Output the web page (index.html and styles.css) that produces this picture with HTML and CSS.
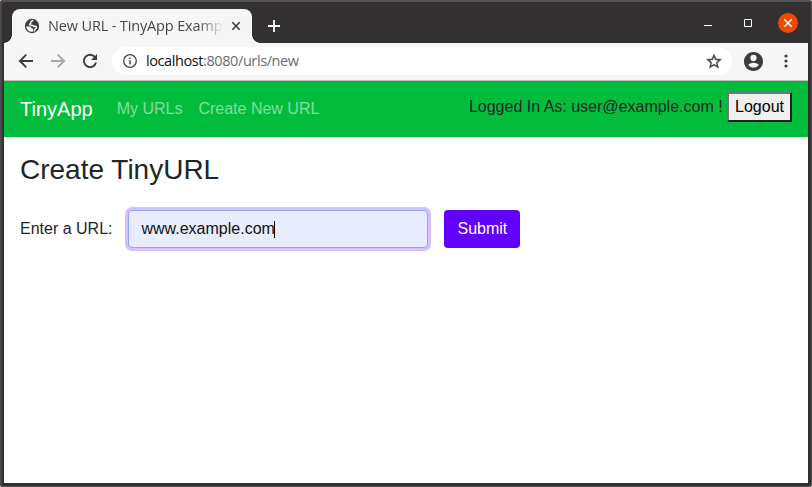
FILE: index.html
```html
<!DOCTYPE html>
<html lang="en">
<head>
<meta charset="utf-8">
<title>New URL - TinyApp Example</title>
<link rel="stylesheet" href="styles.css">
</head>
<body>
<div class="window">
  <header class="titlebar">
    <div class="tab">
      <svg class="globe" viewBox="0 0 16 16" width="16" height="16"><circle cx="8" cy="8" r="7.200" fill="#3c4043"/><path d="M9.300 2.300C7.500 3 6.700 3.700 7 4.600c.3.800-1.700.8-1.500 2 .2 1 2.800.2 3.600 1.200.5.700 1.600.5 2.600.6 1 .2 1 1.700-.1 2.300-.8.500-1 1.700-1.700 2.600" fill="none" stroke="#f6f6f6" stroke-width="1.500"/><path d="M2.200 8.200l3.500.3c1.400.2 1.900.9 1.900 2h1.500v3.200c-3.700.5-6.700-2-6.900-5.500z" fill="#f6f6f6"/></svg>
      <span class="tab-title">New URL - TinyApp Example</span>
      <svg class="tab-close" viewBox="0 0 10 10" width="10" height="10"><path d="M1.300 1.300l7.400 7.400M8.700 1.300L1.300 8.700" stroke="#3c4043" stroke-width="1.600"/></svg>
    </div>
    <svg class="new-tab" viewBox="0 0 12 12" width="12" height="12"><path d="M6 0v12M0 6h12" stroke="#fff" stroke-width="1.800"/></svg>
    <div class="controls">
      <svg class="minimize" viewBox="0 0 8 8" width="8" height="8"><path d="M0 6.500h8" stroke="#fff"/></svg>
      <svg class="maximize" viewBox="0 0 8 8" width="8" height="8"><path d="M.5.5h7v7h-7z" fill="none" stroke="#fff"/></svg>
      <svg viewBox="0 0 20 20" width="20" height="20"><circle cx="10" cy="10" r="10" fill="#f04a00"/><path d="M6.300 6.300l7.400 7.400M13.700 6.300l-7.400 7.400" stroke="#fff" stroke-width="1.500"/></svg>
    </div>
  </header>
  <div class="toolbar">
    <svg viewBox="0 0 16 16" width="16" height="16"><path d="M15 8H2M8.300 1.600L1.900 8l6.400 6.400" fill="none" stroke="#3c3c3c" stroke-width="1.900"/></svg>
    <svg viewBox="0 0 16 16" width="16" height="16"><path d="M1 8h13M7.700 1.600L14.100 8l-6.400 6.400" fill="none" stroke="#a6a6a6" stroke-width="1.900"/></svg>
    <svg viewBox="0 0 16 16" width="16" height="16"><path d="M13 4.100A6.200 6.200 0 1 0 14.100 9.600" fill="none" stroke="#3c3c3c" stroke-width="1.900"/><path d="M15 1v6H9z" fill="#3c3c3c"/></svg>
    <div class="address">
      <svg viewBox="0 0 14 14" width="14" height="14"><circle cx="7" cy="7" r="6.300" fill="none" stroke="#444" stroke-width="1.300"/><path d="M7 6.200v4.300M7 3.500V5" stroke="#444" stroke-width="1.500"/></svg>
      <span class="url">localhost<span class="path">:8080/urls/new</span></span>
      <svg class="star" viewBox="1.500 1 21 21" width="16" height="16"><path fill="#444" stroke="#444" stroke-width=".4" d="M22 9.240l-7.190-.62L12 2 9.190 8.630 2 9.240l5.460 4.730L5.820 21 12 17.270 18.180 21l-1.630-7.030L22 9.240zM12 15.400l-3.760 2.270 1-4.280-3.320-2.880 4.380-.38L12 6.100l1.710 4.040 4.380.38-3.320 2.880 1 4.280L12 15.400z"/></svg>
    </div>
    <svg class="profile" viewBox="2 2 20 20" width="19" height="19"><path fill="#3c3c3c" d="M12 2C6.480 2 2 6.480 2 12s4.480 10 10 10 10-4.480 10-10S17.520 2 12 2zm0 3a3.300 3.300 0 1 1 0 6.600 3.300 3.300 0 0 1 0-6.600zm0 13.400c-2.300 0-4.300-1-5.500-2.700.1-1.500 3.500-2.500 5.500-2.500s5.400 1 5.500 2.500c-1.200 1.700-3.200 2.700-5.500 2.700z"/></svg>
    <svg class="kebab" viewBox="0 0 4 14" width="4" height="14"><g fill="#3c3c3c"><circle cx="2" cy="2" r="1.600"/><circle cx="2" cy="7" r="1.600"/><circle cx="2" cy="12" r="1.600"/></g></svg>
  </div>
  <div class="page">
    <nav class="navbar">
      <a class="brand">TinyApp</a>
      <a class="link">My URLs</a>
      <a class="link">Create New URL</a>
      <div class="session">Logged In As: user@example.com ! <button class="logout">Logout</button></div>
    </nav>
    <main>
      <h3>Create TinyURL</h3>
      <form class="form">
        <label>Enter a URL:</label>
        <div class="field">www.example.com<i class="caret"></i></div>
        <button type="button" class="submit">Submit</button>
      </form>
    </main>
  </div>
</div>
</body>
</html>
```
FILE: styles.css
```css
* { box-sizing: border-box; }
html { background: #fff; }
body {
  margin: 0;
  font: 16px/24px "Liberation Sans", Arial, sans-serif;
  color: #212529;
}
svg { display: block; flex: none; }
.window {
  width: 812px;
  height: 487px;
  padding: 0 4px 4px;
  display: flex;
  flex-direction: column;
  overflow: hidden;
  background: #323030;
  border-radius: 3px;
  box-shadow: inset 0 2px #555453, inset 2px 0 #4b4947, inset -1px -1px #555453;
}
.titlebar {
  height: 43px;
  flex: none;
  display: flex;
  align-items: flex-start;
  padding: 9px 10px 0 8px;
}
.tab {
  position: relative;
  width: 240px;
  height: 34px;
  display: flex;
  align-items: center;
  padding: 0 11px 0 12px;
  background: #f6f6f6;
  border-radius: 8px 8px 0 0;
}
.tab::before, .tab::after {
  content: "";
  position: absolute;
  bottom: 0;
  width: 8px;
  height: 8px;
}
.tab::before {
  left: -8px;
  background: radial-gradient(circle at 0 0, transparent 7.5px, #f6f6f6 8px);
}
.tab::after {
  right: -8px;
  background: radial-gradient(circle at 100% 0, transparent 7.5px, #f6f6f6 8px);
}
.tab-title {
  width: 176px;
  margin-left: 8px;
  overflow: hidden;
  white-space: nowrap;
  font: 14.5px/20px "Open Sans", "Noto Sans", sans-serif;
  letter-spacing: -.15px;
  color: #45474a;
  mask-image: linear-gradient(to right, #000 150px, transparent);
}
.tab-close { margin-left: auto; }
.new-tab { margin: 11px 0 0 16px; }
.controls {
  margin: 4px 0 0 auto;
  display: flex;
  align-items: center;
}
.minimize { margin-right: 32px; }
.maximize { margin-right: 26px; }
.toolbar {
  height: 38px;
  flex: none;
  display: flex;
  align-items: center;
  gap: 16px;
  padding: 0 19px 1px 14px;
  background: #f6f6f6;
  border-bottom: 1px solid #bdbfbd;
}
.address {
  width: 620px;
  height: 28px;
  margin-left: -2px;
  display: flex;
  align-items: center;
  padding: 0 10px 0 11px;
  background: #fff;
  border-radius: 14px;
}
.url {
  margin-left: 9px;
  font: 14.5px/20px "Open Sans", "Noto Sans", sans-serif;
  letter-spacing: -.41px;
  color: #111;
  white-space: nowrap;
}
.path { color: #6b6d70; }
.star { margin-left: auto; }
.profile { margin-left: -4px; }
.kebab { margin-left: 5px; }
.page { flex: 1; background: #fff; }
.navbar {
  height: 56px;
  display: flex;
  align-items: center;
  padding: 0 16px;
  background: #02bc3c;
}
.brand {
  margin-right: 24px;
  font-size: 20px;
  line-height: 30px;
  color: #fff;
}
.link {
  margin-right: 16px;
  color: rgba(255, 255, 255, .5);
}
.session { margin: -4px 0 0 auto; }
.logout {
  margin: 0;
  padding: 1px 6px;
  font: inherit;
  color: #000;
  background: #efefef;
  border: 2px solid;
  border-color: #767676 #212121 #212121 #767676;
}
main { padding: 16px; }
h3 {
  margin: 0;
  font-size: 28px;
  font-weight: 500;
  line-height: 34px;
}
.form {
  margin-top: 23px;
  display: flex;
  align-items: center;
  gap: 16px;
}
.field {
  width: 300px;
  height: 38px;
  display: flex;
  align-items: center;
  padding: 0 12px;
  color: #111;
  background: #e8ecfe;
  border: 1px solid #8fa5fa;
  border-radius: 4px;
  box-shadow: 0 0 0 3px #d7bffd;
}
.caret {
  width: 1px;
  height: 17px;
  margin-left: -1px;
  background: #000;
}
.submit {
  height: 38px;
  padding: 0 13px;
  font: inherit;
  color: #fff;
  background: #6200ff;
  border: 0;
  border-radius: 4px;
}
```
